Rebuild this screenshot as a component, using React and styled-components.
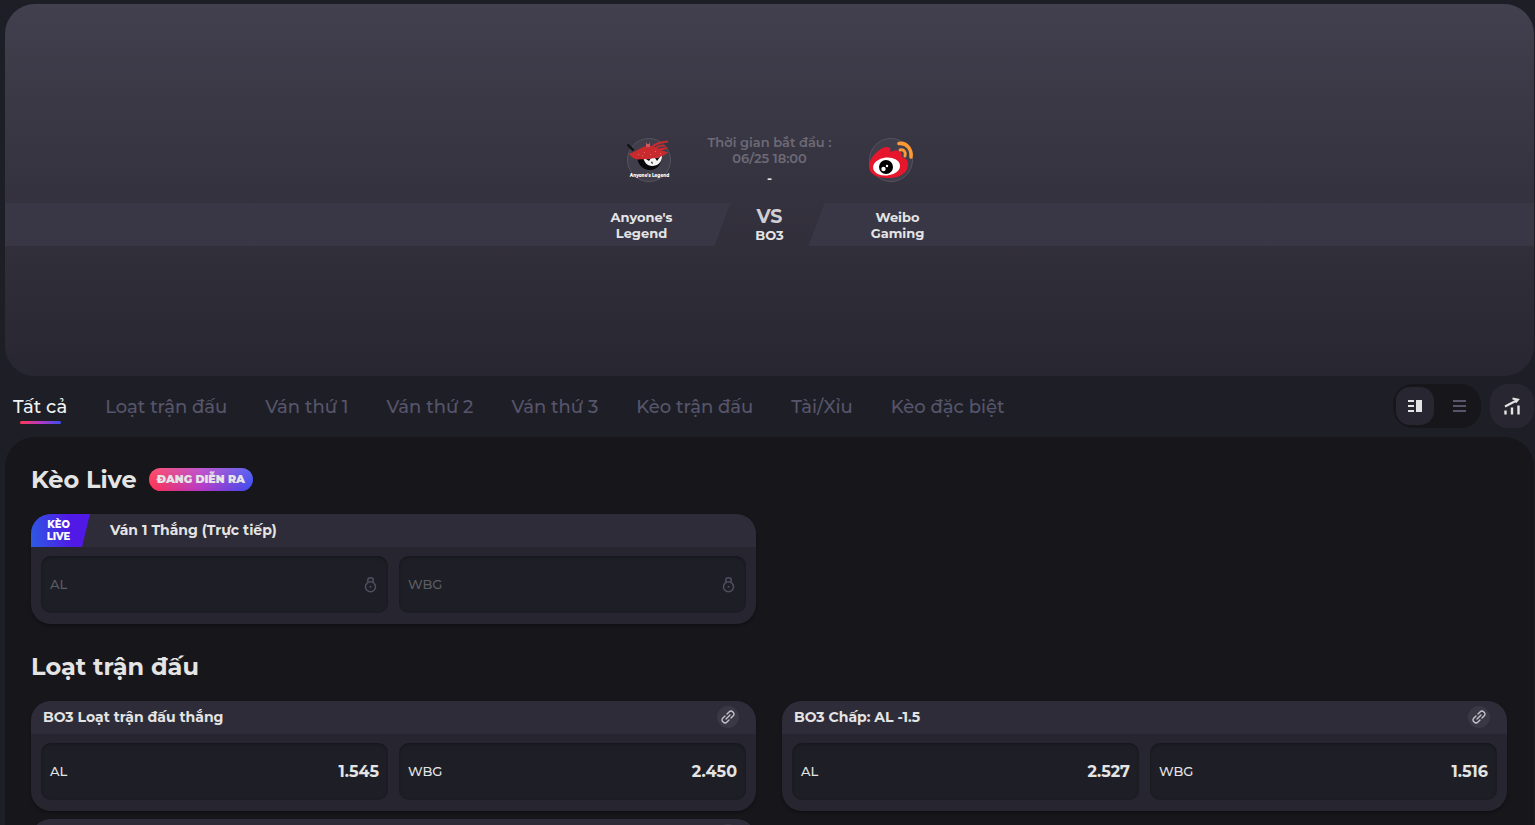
import React, { useState } from "react";
import styled, { createGlobalStyle } from "styled-components";

const GlobalStyle = createGlobalStyle`
  * {
    box-sizing: border-box;
  }

  html {
    scrollbar-width: none;
  }

  body {
    margin: 0;
    background-color: #1e1f26;
    color: #e4e4e4;
    font-family: Montserrat, Inter, "Noto Sans", sans-serif;
    font-size: 13px;
    line-height: 16px;
  }

  button {
    border: 0;
    padding: 0;
    background: none;
    color: inherit;
    font: inherit;
    cursor: pointer;
  }
`;

const Page = styled.div`
  padding: 4px 1px 0 5px;
`;

const Hero = styled.header`
  display: flex;
  flex-direction: column;
  justify-content: center;
  min-height: 372px;
  border-radius: 30px;
  background: linear-gradient(#423f4e, #282630);
`;

const MatchInfo = styled.div`
  display: flex;
  justify-content: space-between;
  align-items: flex-start;
  width: 286px;
  height: 69px;
  margin: 0 auto;
  font-weight: 600;
`;

const TeamLogo = styled.svg`
  width: 44px;
  height: 44px;
  margin-top: 4px;
  overflow: visible;
`;

const StartTime = styled.div`
  color: #6d6a76;
  text-align: center;
`;

const Score = styled.div`
  color: #e4e4e4;
  font-weight: 700;
  line-height: 24px;
`;

const VersusBand = styled.div`
  display: grid;
  grid-template-columns: 1fr 78px 1fr;
  height: 43px;
`;

const Wing = styled.div`
  display: flex;
  align-items: center;
  justify-content: ${(props) => (props.$side === "left" ? "flex-end" : "flex-start")};
  padding: 0 40px;
  background-color: #393745;
  clip-path: ${(props) =>
    props.$side === "left"
      ? "polygon(0 0, 100% 0, calc(100% - 16px) 100%, 0 100%)"
      : "polygon(16px 0, 100% 0, 100% 100%, 0 100%)"};
`;

const TeamName = styled.div`
  width: 98px;
  padding: 0 14px;
  font-weight: 700;
  text-align: center;
`;

const Versus = styled.div`
  display: flex;
  flex-direction: column;
  align-items: center;
  padding-top: 4px;
  font-weight: 700;
`;

const VersusLabel = styled.span`
  color: #cfced4;
  font-size: 19px;
  line-height: 20px;
`;

const Toolbar = styled.div`
  display: flex;
  align-items: center;
  gap: 9px;
  height: 61px;
  padding: 0 0 2px 8px;
`;

const Tabs = styled.nav`
  display: flex;
  flex: 1;
  gap: 38px;
  padding-top: 8px;
`;

const Tab = styled.button`
  display: flex;
  flex-direction: column;
  align-items: center;
  gap: 2px;
  color: ${(props) => (props.$active ? "#f2f2f2" : "#57556b")};
  font-size: 18px;
  line-height: 24px;
  font-weight: 500;
  white-space: nowrap;

  &::after {
    content: "";
    width: 41px;
    height: 3px;
    border-radius: 2px;
    background: ${(props) =>
      props.$active ? "linear-gradient(90deg, #ff3a55, #b437c5 50%, #3b4df0)" : "none"};
  }
`;

const ViewSwitch = styled.div`
  display: flex;
  align-items: center;
  gap: 6px;
  height: 44px;
  padding: 3px;
  border-radius: 20px;
  background-color: #17161b;
`;

const ViewButton = styled.button`
  display: grid;
  place-items: center;
  width: 38px;
  height: 38px;
  border-radius: 14px;
  background-color: ${(props) => (props.$active ? "#282630" : "transparent")};
  color: ${(props) => (props.$active ? "#e4e4e4" : "#57556b")};
`;

const StatsButton = styled.button`
  display: grid;
  place-items: center;
  width: 44px;
  height: 44px;
  border-radius: 18px;
  background-color: #282630;
`;

const Panel = styled.main`
  display: flex;
  flex-direction: column;
  gap: 28px;
  padding: 28px 27px 28px 26px;
  border-radius: 30px;
  background-color: #17161b;
`;

const SectionHead = styled.div`
  display: flex;
  align-items: flex-start;
  gap: 12px;
  margin-bottom: 19px;
`;

const SectionTitle = styled.h2`
  margin: 0;
  font-size: 24px;
  line-height: 30px;
  font-weight: 700;
`;

const LiveBadge = styled.span`
  height: 23px;
  margin-top: 3px;
  padding: 0 8px;
  border-radius: 12px;
  background:
    linear-gradient(rgba(255, 255, 255, 0.16), transparent),
    linear-gradient(90deg, #ff3050, #b437c5 50%, #3b4af0);
  font-size: 11px;
  line-height: 22px;
  font-weight: 900;
`;

const CardGrid = styled.div`
  display: grid;
  grid-template-columns: 1fr 1fr;
  gap: 8px 26px;
`;

const Card = styled.article`
  overflow: hidden;
  border-radius: 20px;
  background-color: #27252f;
  box-shadow: 0 2px 3px rgba(0, 0, 0, 0.3);
`;

const CardHead = styled.div`
  display: flex;
  align-items: center;
  height: 33px;
  padding: 0 17px 2px 0;
  background-color: #2e2c38;
`;

const LiveTag = styled.span`
  align-self: flex-start;
  width: 59px;
  padding: 5px 4px 4px 0;
  background: linear-gradient(80deg, #2c5be4, #5019e6 65%);
  clip-path: polygon(0 0, 100% 0, calc(100% - 8px) 100%, 0 100%);
  color: #fff;
  font-size: 10px;
  line-height: 12px;
  font-weight: 800;
  text-align: center;
`;

const CardTitle = styled.h3`
  flex: 1;
  margin: 0;
  padding-left: ${(props) => (props.$live ? "20px" : "12px")};
  font-size: 14px;
  line-height: 16px;
  font-weight: 700;
`;

const LinkButton = styled.button`
  display: grid;
  place-items: center;
  width: 22px;
  height: 22px;
  border-radius: 50%;
  background-color: #3a3845;
  color: #c4c3c9;
`;

const OddsRow = styled.div`
  display: grid;
  grid-template-columns: 1fr 1fr;
  gap: 11px;
  padding: 9px 10px 11px;
`;

const OddsButton = styled.button`
  display: flex;
  align-items: center;
  justify-content: space-between;
  height: 57px;
  padding: 0 9px;
  border-radius: 10px;
  background-color: #1e1f26;
  box-shadow: inset 0 1px 3px rgba(0, 0, 0, 0.35);
  color: #e4e4e4;

  &:disabled {
    padding-right: 11px;
    color: #5c5c62;
    cursor: default;
  }
`;

const OddsLabel = styled.span`
  padding-bottom: 2px;
  font-weight: 500;
`;

const OddsValue = styled.strong`
  font-size: 16px;
  line-height: 20px;
  font-weight: 700;
`;

const tabs = [
  "Tất cả",
  "Loạt trận đấu",
  "Ván thứ 1",
  "Ván thứ 2",
  "Ván thứ 3",
  "Kèo trận đấu",
  "Tài/Xỉu",
  "Kèo đặc biệt",
];

const sections = [
  {
    title: "Kèo Live",
    live: true,
    markets: [
      {
        id: "live-1",
        title: "Ván 1 Thắng (Trực tiếp)",
        live: true,
        odds: [{ team: "AL" }, { team: "WBG" }],
      },
    ],
  },
  {
    title: "Loạt trận đấu",
    markets: [
      {
        id: "series-win",
        title: "BO3 Loạt trận đấu thắng",
        odds: [
          { team: "AL", value: "1.545" },
          { team: "WBG", value: "2.450" },
        ],
      },
      {
        id: "handicap",
        title: "BO3 Chấp: AL -1.5",
        odds: [
          { team: "AL", value: "2.527" },
          { team: "WBG", value: "1.516" },
        ],
      },
      // no prices yet
      { id: "pending", title: "", odds: [] },
    ],
  },
];

function LegendLogo() {
  return (
    <TeamLogo viewBox="0 0 44 44" role="img" aria-label="Anyone's Legend">
      <circle cx="22" cy="22" r="21.5" fill="#403e4a" stroke="#55535f" />
      <path d="M0.500 6.500l6 6" stroke="#111" strokeWidth="2.400" />
      <path d="M10 19c1 8 6 13 13 13s12-6 12-14z" fill="#08080a" />
      <path d="M16 19c1 5 4 9 9 9 6 0 10-4 10-10z" fill="#f4f4f4" />
      <path d="M19 21l5-1-2 3zM28 20l5-1-3 4zM25 23l1 3-2-1z" fill="#111" />
      <path
        d="M2 15.500c5-1 8-4 13-6 4-2 10-2 14 0 3 2 7 3 12 5-3 3-6 3-9 5-7 1-15 2-22 2-3-1-7-3-8-6z"
        fill="#c92a2d"
      />
      <path
        d="M25 9c4-4 8-5 16-5.500M27 11c5-4 8-4 11-3M30 12l10-2"
        stroke="#c92a2d"
        strokeWidth="1.800"
        fill="none"
      />
      <path d="M19 4l1 2h2l1-2v5h-4z" fill="#d2585d" />
      <path
        d="M11 16l1 1M17 14l1 1M23 16l1 1M28 13l1 1M33 15l1 1M15 18l1 0"
        stroke="#e88"
        strokeWidth="0.700"
      />
      <text x="22.500" y="39" fill="#fff" fontSize="4.300" fontWeight="800" textAnchor="middle">
        Anyone's Legend
      </text>
    </TeamLogo>
  );
}

function WeiboLogo() {
  return (
    <TeamLogo viewBox="0 0 44 44" role="img" aria-label="Weibo Gaming">
      <circle cx="22" cy="22" r="21.5" fill="#403e4a" stroke="#55535f" />
      <path
        d="M0 28C0 20 11 9 18 9c4 0 4 3 3 5 6-3 13-2 12 5 4 1 6 3 6 8 0 8-10 14-20 13C7 40 0 36 0 28z"
        fill="#e6162d"
      />
      <ellipse cx="17.500" cy="28.500" rx="13.500" ry="9" fill="#fff" transform="rotate(-6 18 28)" />
      <circle cx="17" cy="29" r="7" fill="#000" />
      <circle cx="14.500" cy="31" r="2.200" fill="#fff" />
      <circle cx="18" cy="28" r="1.200" fill="#fff" />
      <path
        d="M30 5.500c8-1 13 6 12 13.500"
        stroke="#ff9933"
        strokeWidth="3.600"
        strokeLinecap="round"
        fill="none"
      />
      <path
        d="M31 12c4-1 6 2 5 6"
        stroke="#ff9933"
        strokeWidth="3"
        strokeLinecap="round"
        fill="none"
      />
    </TeamLogo>
  );
}

function ColumnsIcon() {
  return (
    <svg width="14" height="12" viewBox="0 0 14 12" fill="currentColor" aria-hidden="true">
      <path d="M0 0h6v2H0zM0 5h6v2H0zM0 10h6v2H0zM8 0h6v12H8z" />
    </svg>
  );
}

function RowsIcon() {
  return (
    <svg width="13" height="12" viewBox="0 0 13 12" fill="currentColor" aria-hidden="true">
      <path d="M0 0h13v2H0zM0 5h13v2H0zM0 10h13v2H0z" />
    </svg>
  );
}

function StatsIcon() {
  return (
    <svg width="16" height="18" viewBox="0 0 16 18" fill="none" stroke="currentColor" aria-hidden="true">
      <path d="M1.500 17.500v-4M8 17.500v-7M14.500 17.500v-9" strokeWidth="2.400" />
      <path d="M1 9.500L13.500 3M8.500 1.500l5.500 1.200-2.500 2.800" strokeWidth="2" />
    </svg>
  );
}

function LockIcon() {
  return (
    <svg width="13" height="16" viewBox="0 0 13 16" fill="none" stroke="#4f4d60" aria-hidden="true">
      <circle cx="6.500" cy="9.700" r="5" strokeWidth="1.500" />
      <path d="M3.800 5V3.200a2.700 2.400 0 015.400 0V5" strokeWidth="1.500" />
      <circle cx="6.500" cy="9.700" r="1" fill="#4f4d60" stroke="none" />
    </svg>
  );
}

function LinkIcon() {
  return (
    <svg
      width="14"
      height="14"
      viewBox="0 0 14 14"
      fill="none"
      stroke="currentColor"
      strokeWidth="1.400"
      strokeLinecap="round"
      aria-hidden="true"
    >
      <path d="M6 4l2.300-2.300a2.300 2.300 0 013.300 0l.7.7a2.300 2.300 0 010 3.300L10 8M8 10l-2.300 2.300a2.300 2.300 0 01-3.300 0l-.7-.7a2.300 2.300 0 010-3.300L4 6M5 9l4-4" />
    </svg>
  );
}

function Market(props) {
  const { market } = props;

  return (
    <Card>
      <CardHead>
        {market.live && (
          <LiveTag>
            KÈO
            <br />
            LIVE
          </LiveTag>
        )}
        <CardTitle $live={market.live}>{market.title}</CardTitle>
        {!market.live && (
          <LinkButton aria-label="Link">
            <LinkIcon />
          </LinkButton>
        )}
      </CardHead>
      <OddsRow>
        {market.odds.map((item) => (
          <OddsButton key={item.team} disabled={!item.value}>
            <OddsLabel>{item.team}</OddsLabel>
            {item.value ? <OddsValue>{item.value}</OddsValue> : <LockIcon />}
          </OddsButton>
        ))}
      </OddsRow>
    </Card>
  );
}

function App() {
  const [activeTab, setActiveTab] = useState(tabs[0]);
  const [view, setView] = useState("columns");

  return (
    <Page>
      <GlobalStyle />
      <Hero>
        <MatchInfo>
          <LegendLogo />
          <StartTime>
            Thời gian bắt đầu :
            <br />
            06/25 18:00
            <Score>-</Score>
          </StartTime>
          <WeiboLogo />
        </MatchInfo>
        <VersusBand>
          <Wing $side="left">
            <TeamName>Anyone's Legend</TeamName>
          </Wing>
          <Versus>
            <VersusLabel>VS</VersusLabel>
            <span>BO3</span>
          </Versus>
          <Wing $side="right">
            <TeamName>Weibo Gaming</TeamName>
          </Wing>
        </VersusBand>
      </Hero>

      <Toolbar>
        <Tabs>
          {tabs.map((tab) => (
            <Tab key={tab} $active={tab === activeTab} onClick={() => setActiveTab(tab)}>
              {tab}
            </Tab>
          ))}
        </Tabs>
        <ViewSwitch>
          <ViewButton
            $active={view === "columns"}
            aria-label="Columns"
            onClick={() => setView("columns")}
          >
            <ColumnsIcon />
          </ViewButton>
          <ViewButton $active={view === "rows"} aria-label="Rows" onClick={() => setView("rows")}>
            <RowsIcon />
          </ViewButton>
        </ViewSwitch>
        <StatsButton aria-label="Statistics">
          <StatsIcon />
        </StatsButton>
      </Toolbar>

      <Panel>
        {sections.map((section) => (
          <section key={section.title}>
            <SectionHead>
              <SectionTitle>{section.title}</SectionTitle>
              {section.live && <LiveBadge>ĐANG DIỄN RA</LiveBadge>}
            </SectionHead>
            <CardGrid>
              {section.markets.map((market) => (
                <Market key={market.id} market={market} />
              ))}
            </CardGrid>
          </section>
        ))}
      </Panel>
    </Page>
  );
}

export default App;
